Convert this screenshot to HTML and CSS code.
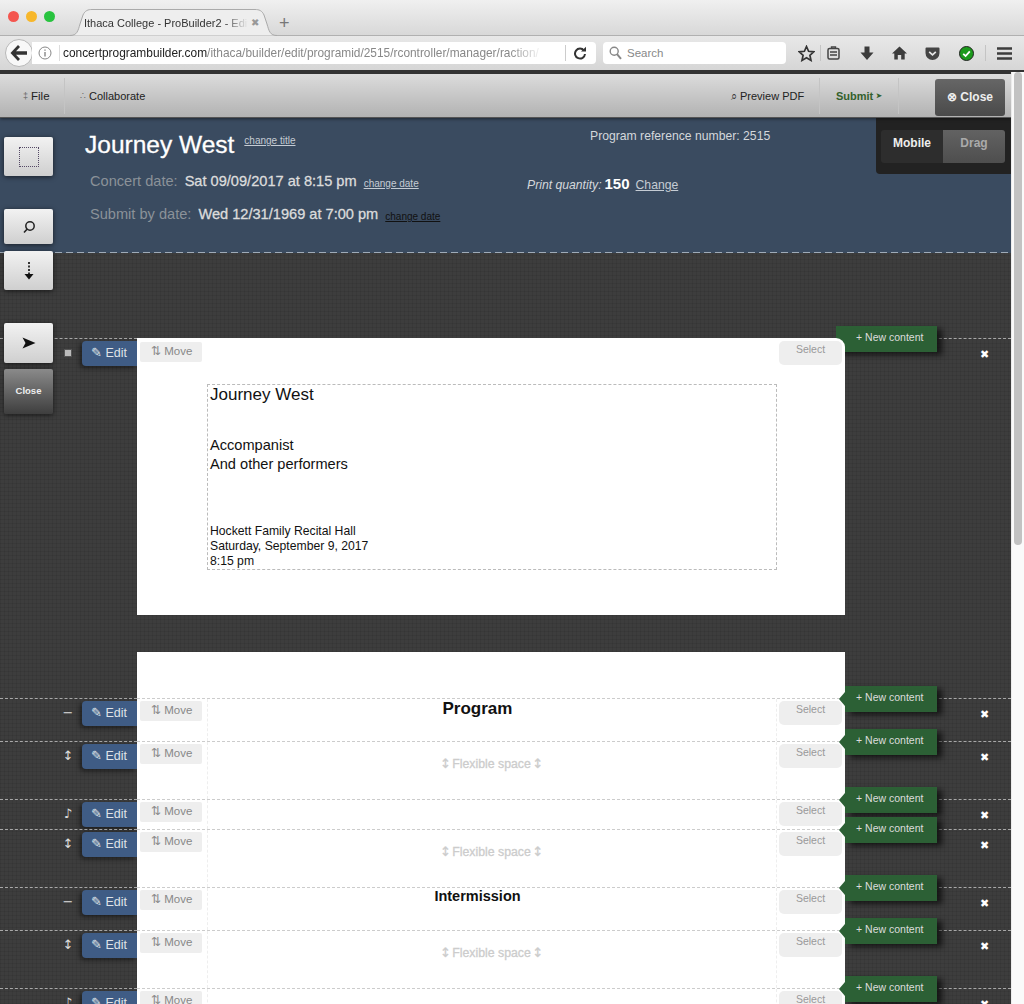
FILE: index.html
```html
<!DOCTYPE html>
<html lang="en">
<head>
<meta charset="UTF-8" />
<title>Ithaca College - ProBuilder2 - Edit</title>
<link rel="stylesheet" href="styles.css">
</head>
<body>
    <div class="tabbar">
        <div class="lights">
            <span class="light light-red"></span>
            <span class="light light-yellow"></span>
            <span class="light light-green"></span>
        </div>
        <div class="tab">
            <svg class="tab-shape" width="207" height="27" viewBox="0 0 207 27"><path d="M0 26.5 C7 26.5 8 22 10 15 L13 6 C15 1.5 18 0.5 22 0.5 H185 C189 0.5 192 1.5 194 6 L197 15 C199 22 200 26.5 207 26.5" fill="#eee" stroke="#aaa"/></svg>
            <span class="tab-title">Ithaca College - ProBuilder2 - Edit</span>
            <span class="tab-close">✖</span>
        </div>
        <span class="tab-new">+</span>
    </div>

    <div class="navbar">
        <div class="back">
            <svg width="20" height="18" viewBox="0 0 20 18"><path d="M9 1 L1.5 9 L9 17 L11 15 L7 10.7 H18 V7.3 H7 L11 3 Z" fill="#333"/></svg>
        </div>
        <div class="urlbar">
            <svg class="info" width="14" height="14" viewBox="0 0 14 14"><circle cx="7" cy="7" r="6" fill="none" stroke="#888" stroke-width="1"/><path d="M7 6 V10.5 M7 3.4 V4.8" stroke="#888" stroke-width="1.4"/></svg>
            <span class="url"><span class="url-host">concertprogrambuilder.com</span>/ithaca/builder/edit/programid/2515/rcontroller/manager/raction/</span>
            <span class="url-sep"></span>
            <svg class="reload" width="14" height="14" viewBox="0 0 14 14"><path d="M11 4.5 A5 5 0 1 0 12 8" fill="none" stroke="#333" stroke-width="2"/><path d="M8 5.5 H13 V0.8 Z" fill="#333"/></svg>
        </div>
        <div class="searchbar">
            <svg width="13" height="14" viewBox="0 0 13 14"><circle cx="5.2" cy="5.2" r="4" fill="none" stroke="#888" stroke-width="1.4"/><path d="M8 8.2 L12 12.8" stroke="#888" stroke-width="2"/></svg>
            <span>Search</span>
        </div>
        <div class="nav-icons">
            <svg width="17" height="17" viewBox="0 0 17 17"><path d="M8.5 1.5 L10.6 6.3 L15.8 6.8 L11.9 10.3 L13 15.4 L8.5 12.8 L4 15.4 L5.1 10.3 L1.2 6.8 L6.4 6.3 Z" fill="none" stroke="#333" stroke-width="1.7"/></svg>
            <span class="nav-sep nav-sep-star"></span>
            <svg class="nav-clip" width="13" height="14" viewBox="0 0 13 14"><rect x="1" y="2.5" width="11" height="10.5" rx="1.5" fill="none" stroke="#444" stroke-width="1.5"/><path d="M4.5 2.5 V1 H8.5 V2.5 M3 6 H10 M3 9 H10" stroke="#444" stroke-width="1.4" fill="none"/></svg>
            <svg class="nav-down" width="14" height="15" viewBox="0 0 14 15"><path d="M4.5 0.5 H9.5 V6.5 H13.5 L7 14 L0.5 6.5 H4.5 Z" fill="#3c3c3c"/></svg>
            <svg class="nav-home" width="15" height="14" viewBox="0 0 15 14"><path d="M7.5 0.5 L15 7.5 H12.7 V13.5 H9.2 V9 H5.8 V13.5 H2.3 V7.5 H0 Z" fill="#3c3c3c"/></svg>
            <svg class="nav-pocket" width="15" height="13" viewBox="0 0 15 13"><path d="M1.5 0.5 H13.5 A1 1 0 0 1 14.5 1.5 V6 A7 7 0 0 1 0.5 6 V1.5 A1 1 0 0 1 1.5 0.5 Z" fill="#444"/><path d="M4.2 4.8 L7.5 7.8 L10.8 4.8" fill="none" stroke="#e6e6e6" stroke-width="1.7"/></svg>
            <svg class="nav-check" width="15" height="15" viewBox="0 0 15 15"><circle cx="7.5" cy="7.5" r="7" fill="#1c9a1c" stroke="#222" stroke-width="1"/><path d="M4.2 7.8 L6.6 10 L10.8 5.4" fill="none" stroke="#fff" stroke-width="1.8"/></svg>
            <span class="nav-sep nav-sep-menu"></span>
            <svg class="nav-menu" width="15" height="13" viewBox="0 0 15 13"><path d="M0 1.5 H15 M0 6.5 H15 M0 11.5 H15" stroke="#3c3c3c" stroke-width="2.4"/></svg>
        </div>
    </div>

    <div class="app">
        <div class="main">
            <div class="menubar">
                <div class="menu-item menu-file"><span class="menu-glyph">‡</span> File</div>
                <div class="menu-item menu-collab"><span class="menu-glyph">∴</span> Collaborate</div>
                <div class="menu-right">
                    <div class="menu-item menu-preview"><span class="menu-glyph">⌕</span> Preview PDF</div>
                    <div class="menu-item menu-submit">Submit <span class="submit-arrow">➤</span></div>
                    <div class="menu-close">⊗ Close</div>
                </div>
            </div>

            <div class="header">
                <div class="header-left">
                    <div class="title-line">
                        <h1>Journey West</h1>
                        <a class="small-link">change title</a>
                    </div>
                    <div class="date-line">
                        <span class="date-label">Concert date:</span>
                        <span class="date-value">Sat 09/09/2017 at 8:15 pm</span>
                        <a class="small-link">change date</a>
                    </div>
                    <div class="date-line">
                        <span class="date-label">Submit by date:</span>
                        <span class="date-value">Wed 12/31/1969 at 7:00 pm</span>
                        <a class="small-link small-link-dark">change date</a>
                    </div>
                </div>
                <div class="header-mid">
                    <div class="ref-number">Program reference number: 2515</div>
                    <div class="print-line">
                        <em>Print quantity:</em>
                        <strong>150</strong>
                        <a>Change</a>
                    </div>
                </div>
                <div class="mode-panel">
                    <div class="mode-btn mode-on">Mobile</div>
                    <div class="mode-btn mode-off">Drag</div>
                </div>
            </div>

            <div class="side-tools">
                <div class="tool tool-select"><span class="dotted-box"></span></div>
                <div class="tool tool-zoom">
                    <svg width="14" height="14" viewBox="0 0 14 14"><circle cx="8" cy="6" r="4.2" fill="none" stroke="#222" stroke-width="1.5"/><path d="M5 9.2 L2 12.5" stroke="#222" stroke-width="1.6"/></svg>
                </div>
                <div class="tool tool-down">
                    <svg width="12" height="18" viewBox="0 0 12 18"><path d="M6 0 V2 M6 3.5 V5.5 M6 7 V9 M6 10.5 V13" stroke="#222" stroke-width="1.8"/><path d="M1.5 12 H10.5 L6 17.5 Z" fill="#111"/></svg>
                </div>
                <div class="tool tool-send">
                    <svg width="14" height="12" viewBox="0 0 14 12"><path d="M0.5 0.5 L13.5 6 L0.5 11.5 L3.5 6 Z" fill="#111"/></svg>
                </div>
                <div class="tool tool-close">Close</div>
            </div>

            <div class="stage">
                <div class="row row-cover">
                    <div class="row-left">
                        <span class="row-type type-box"></span>
                        <div class="edit-btn">✎ Edit</div>
                    </div>
                    <div class="row-main row-main-top">
                        <div class="move-btn">⇅ Move</div>
                        <div class="cover-box">
                            <div class="cover-title">Journey West</div>
                            <div class="cover-names">Accompanist<br>And other performers</div>
                            <div class="cover-venue">Hockett Family Recital Hall<br>Saturday, September 9, 2017<br>8:15 pm</div>
                        </div>
                        <div class="select-btn">Select</div>
                    </div>
                    <div class="row-right">
                        <div class="new-btn new-btn-first">+ New content</div>
                        <span class="row-remove">✖</span>
                    </div>
                </div>

                <div class="sheet-top"></div>

                <div class="row row-title">
                    <div class="row-left"><span class="row-type">−</span><div class="edit-btn">✎ Edit</div></div>
                    <div class="row-main">
                        <div class="move-btn">⇅ Move</div>
                        <div class="row-body"><div class="heading heading-big">Program</div></div>
                        <div class="select-btn">Select</div>
                    </div>
                    <div class="row-right"><div class="new-btn">+ New content</div><span class="row-remove">✖</span></div>
                </div>

                <div class="row row-space">
                    <div class="row-left"><span class="row-type">↕</span><div class="edit-btn">✎ Edit</div></div>
                    <div class="row-main">
                        <div class="move-btn">⇅ Move</div>
                        <div class="row-body"><div class="flex-space"><span class="flex-arrow flex-arrow-l">↕</span> Flexible space <span class="flex-arrow flex-arrow-r">↕</span></div></div>
                        <div class="select-btn">Select</div>
                    </div>
                    <div class="row-right"><div class="new-btn">+ New content</div><span class="row-remove">✖</span></div>
                </div>

                <div class="row row-piece">
                    <div class="row-left"><span class="row-type">♪</span><div class="edit-btn">✎ Edit</div></div>
                    <div class="row-main">
                        <div class="move-btn">⇅ Move</div>
                        <div class="row-body"></div>
                        <div class="select-btn">Select</div>
                    </div>
                    <div class="row-right"><div class="new-btn">+ New content</div><span class="row-remove">✖</span></div>
                </div>

                <div class="row row-space">
                    <div class="row-left"><span class="row-type">↕</span><div class="edit-btn">✎ Edit</div></div>
                    <div class="row-main">
                        <div class="move-btn">⇅ Move</div>
                        <div class="row-body"><div class="flex-space"><span class="flex-arrow flex-arrow-l">↕</span> Flexible space <span class="flex-arrow flex-arrow-r">↕</span></div></div>
                        <div class="select-btn">Select</div>
                    </div>
                    <div class="row-right"><div class="new-btn">+ New content</div><span class="row-remove">✖</span></div>
                </div>

                <div class="row row-title">
                    <div class="row-left"><span class="row-type">−</span><div class="edit-btn">✎ Edit</div></div>
                    <div class="row-main">
                        <div class="move-btn">⇅ Move</div>
                        <div class="row-body"><div class="heading">Intermission</div></div>
                        <div class="select-btn">Select</div>
                    </div>
                    <div class="row-right"><div class="new-btn">+ New content</div><span class="row-remove">✖</span></div>
                </div>

                <div class="row row-space">
                    <div class="row-left"><span class="row-type">↕</span><div class="edit-btn">✎ Edit</div></div>
                    <div class="row-main">
                        <div class="move-btn">⇅ Move</div>
                        <div class="row-body"><div class="flex-space"><span class="flex-arrow flex-arrow-l">↕</span> Flexible space <span class="flex-arrow flex-arrow-r">↕</span></div></div>
                        <div class="select-btn">Select</div>
                    </div>
                    <div class="row-right"><div class="new-btn">+ New content</div><span class="row-remove">✖</span></div>
                </div>

                <div class="row row-piece">
                    <div class="row-left"><span class="row-type">♪</span><div class="edit-btn">✎ Edit</div></div>
                    <div class="row-main">
                        <div class="move-btn">⇅ Move</div>
                        <div class="row-body"></div>
                        <div class="select-btn">Select</div>
                    </div>
                    <div class="row-right"><div class="new-btn">+ New content</div><span class="row-remove">✖</span></div>
                </div>
            </div>
        </div>

        <div class="scrollbar"><div class="scroll-thumb"></div></div>
    </div>
</body>
</html>
```

FILE: styles.css
```css
* {
    box-sizing: border-box;
}

html, body {
    height: 1004px;
    overflow: hidden;
}

body {
    margin: 0;
    font-family: "Liberation Sans", Arial, sans-serif;
    background: #fff;
}

/* browser chrome */
.tabbar {
    height: 36px;
    background: linear-gradient(#f0f0f0, #d8d8d8);
    border-bottom: 1px solid #b0b0b0;
    display: flex;
    align-items: flex-end;
}

.lights {
    display: flex;
    gap: 7px;
    padding: 0 0 13px 8px;
}

.light {
    width: 11px;
    height: 11px;
    border-radius: 50%;
}
.light-red { background: #f4564f; }
.light-yellow { background: #f7b72b; }
.light-green { background: #28c33f; }

.tab {
    width: 207px;
    height: 27px;
    margin: 0 0 -1px 15px;
    padding: 0 0 0 14px;
    display: flex;
    align-items: center;
    font-size: 11px;
    color: #333;
    position: relative;
}

.tab-shape {
    position: absolute;
    left: 0;
    top: 0;
}

.tab-title {
    width: 164px;
    white-space: nowrap;
    overflow: hidden;
    position: relative;
    -webkit-mask-image: linear-gradient(90deg, #000 85%, transparent);
    mask-image: linear-gradient(90deg, #000 85%, transparent);
}

.tab-close {
    margin-left: 3px;
    font-size: 10px;
    color: #999;
    position: relative;
}

.tab-new {
    margin: 0 0 0 2px;
    font-size: 18px;
    color: #777;
    line-height: 24px;
}

.navbar {
    height: 34px;
    background: linear-gradient(#e8e8e8, #d6d6d6);
    display: flex;
    align-items: center;
    position: relative;
}

.back {
    width: 28px;
    height: 28px;
    margin-left: 5px;
    background: #f8f8f8;
    border: 1px solid #b8b8b8;
    border-radius: 50%;
    display: flex;
    align-items: center;
    justify-content: center;
    flex-shrink: 0;
}

.urlbar {
    width: 564px;
    height: 22px;
    margin-left: -1px;
    background: #fff;
    border-radius: 0 4px 4px 0;
    display: flex;
    align-items: center;
    font-size: 11.9px;
}

.info {
    margin-left: 6px;
    flex-shrink: 0;
}

.url {
    width: 484px;
    margin-left: 7px;
    padding-left: 3px;
    border-left: 1px solid #ddd;
    line-height: 16px;
    white-space: nowrap;
    overflow: hidden;
    color: #888;
    -webkit-mask-image: linear-gradient(90deg, #000 93%, transparent);
    mask-image: linear-gradient(90deg, #000 93%, transparent);
}

.url-host {
    color: #222;
}

.url-sep {
    width: 1px;
    height: 16px;
    margin-left: 22px;
    background: #ccc;
}

.reload {
    margin-left: 7px;
}

.searchbar {
    width: 183px;
    height: 22px;
    margin-left: 7px;
    padding-left: 6px;
    background: #fff;
    border-radius: 4px;
    display: flex;
    align-items: center;
    gap: 5px;
    font-size: 11.5px;
    color: #888;
}

.nav-icons {
    flex: 1;
    display: flex;
    align-items: center;
    padding-left: 12px;
}

.nav-sep {
    width: 1px;
    height: 16px;
    background: #c4c4c4;
}

.nav-sep-star { margin-left: 5px; }
.nav-clip { margin-left: 6px; }
.nav-down { margin-left: 20px; }
.nav-home { margin-left: 18px; }
.nav-pocket { margin-left: 18px; }
.nav-check { margin-left: 19px; }
.nav-sep-menu { margin-left: 11px; }
.nav-menu { margin-left: 11px; }

/* app area */
.app {
    display: flex;
    height: 934px;
    border-top: 4px solid #333;
}

.main {
    width: 1011px;
    height: 930px;
    position: relative;
    overflow: hidden;
}

.scrollbar {
    width: 13px;
    margin-top: -2px;
    background: #fafafa;
    border-left: 1px solid #ececec;
    padding: 0 2px;
}

.scroll-thumb {
    height: 473px;
    background: #c2c2c2;
    border-radius: 5px;
}

.menubar {
    height: 44px;
    background: linear-gradient(#dcdcdc, #b2b2b2);
    border-bottom: 1px solid #555;
    display: flex;
    font-size: 11px;
    color: #222;
    position: relative;
    z-index: 2;
    box-shadow: 0 1px 3px rgba(0, 0, 0, 0.5);
}

.menu-item {
    height: 36px;
    margin-top: 4px;
    display: flex;
    align-items: center;
    gap: 3px;
    white-space: nowrap;
    border-right: 1px solid #c4c4c4;
}

.menu-glyph {
    color: #666;
    font-size: 9px;
}

.menu-file {
    width: 65px;
    padding-left: 23px;
    font-size: 11.5px;
}

.menu-collab {
    padding-left: 15px;
    border-right: none;
}

.menu-right {
    margin-left: auto;
    display: flex;
}

.menu-preview {
    width: 90px;
    padding-left: 1px;
}

.menu-preview .menu-glyph {
    font-size: 11px;
    color: #333;
}

.menu-submit {
    width: 79px;
    padding-left: 16px;
    font-weight: bold;
    color: #33602c;
}

.submit-arrow {
    font-size: 7px;
}

.menu-close {
    width: 70px;
    height: 37px;
    margin: 5px 6px 0 36px;
    background: linear-gradient(#666, #4a4a4a);
    border-radius: 3px;
    color: #eee;
    font-weight: bold;
    font-size: 12px;
    text-align: center;
    line-height: 36px;
    white-space: nowrap;
}

.header {
    height: 135px;
    background: #3a4b60 repeating-linear-gradient(90deg, #9fabb8 0 7px, transparent 7px 11px) left bottom / 100% 1px no-repeat;
    display: flex;
    position: relative;
}

.header-left {
    width: 500px;
    padding: 12px 0 0 85px;
}

.title-line {
    display: flex;
    align-items: flex-start;
    gap: 10px;
    height: 43px;
}

h1 {
    margin: 0;
    font-size: 24.5px;
    font-weight: normal;
    line-height: 30px;
    color: #fff;
    -webkit-text-stroke: 0.3px #fff;
}

.small-link {
    font-size: 10px;
    line-height: 20px;
    color: #c5ccd4;
    text-decoration: underline;
}

.title-line .small-link {
    padding-top: 1px;
}

.date-line {
    height: 33px;
    padding: 0 0 0 5px;
    display: flex;
    align-items: baseline;
    gap: 7px;
    white-space: nowrap;
}

.date-line .small-link {
    position: relative;
    top: 1px;
}

.date-line .small-link-dark {
    color: #111;
}

.date-label {
    font-size: 14.6px;
    color: #8b9299;
}

.date-value {
    font-size: 14.6px;
    color: #dcdcdc;
    -webkit-text-stroke: 0.3px #dcdcdc;
}

.header-mid {
    width: 300px;
    margin-left: 27px;
    padding-top: 11px;
    font-size: 12.2px;
    color: #d4d8dc;
}

.ref-number {
    padding-left: 63px;
    line-height: 14px;
}

.print-line {
    margin-top: 32px;
    display: flex;
    align-items: baseline;
    gap: 3px;
}

.print-line strong {
    font-size: 15px;
    color: #fff;
}

.print-line a {
    margin-left: 3px;
    text-decoration: underline;
    color: #c5ccd4;
}

.mode-panel {
    position: absolute;
    top: 0;
    right: 0;
    width: 135px;
    height: 56px;
    padding: 12px 6px 0 5px;
    background: #222;
    border-radius: 0 0 0 4px;
    display: flex;
    font-size: 12px;
    font-weight: bold;
}

.mode-btn {
    width: 62px;
    height: 33px;
    text-align: center;
    line-height: 27px;
}

.mode-on {
    background: #2d2d2d;
    color: #eee;
    border-radius: 3px 0 0 3px;
}

.mode-off {
    background: linear-gradient(#626262, #4e4e4e);
    color: #aaa;
    border-radius: 0 3px 3px 0;
}

/* floating tools on the left */
.side-tools {
    position: absolute;
    left: 4px;
    top: 63px;
    width: 49px;
    display: flex;
    flex-direction: column;
    z-index: 3;
}

.tool {
    background: linear-gradient(#f2f2f2, #cfcfcf);
    border-radius: 2px;
    box-shadow: 0 1px 5px rgba(0, 0, 0, 0.6);
    display: flex;
    align-items: center;
    justify-content: center;
}

.tool-select { height: 39px; }
.tool-zoom { height: 35px; margin-top: 33px; }
.tool-down { height: 39px; margin-top: 7px; }
.tool-send { height: 40px; margin-top: 33px; }

.tool-close {
    height: 45px;
    margin-top: 6px;
    padding-bottom: 2px;
    background: linear-gradient(#8a8a8a, #3e3e3e);
    color: #eee;
    font-size: 9.5px;
    font-weight: bold;
}

.dotted-box {
    width: 20px;
    height: 20px;
    border: 1px dotted #554a66;
}

/* stage and rows */
.stage {
    height: 751px;
    padding-top: 85px;
    background-color: #3d3d3d;
    background-image:
        repeating-linear-gradient(0deg, rgba(0, 0, 0, 0.07) 0 1px, transparent 1px 4px),
        repeating-linear-gradient(90deg, rgba(0, 0, 0, 0.07) 0 1px, transparent 1px 4px);
    overflow: hidden;
}

.row {
    display: flex;
    position: relative;
}

.row-cover { height: 277px; margin-bottom: 37px; }
.row-title { height: 43px; }
.row-space { height: 58px; }
.row-piece { height: 30px; }

.row-left {
    width: 137px;
    padding: 2px 0 0 82px;
    border-top: 1px dashed #a8a8a8;
    position: relative;
}

.row-type {
    position: absolute;
    left: 60px;
    top: 4px;
    width: 16px;
    text-align: center;
    font-family: "DejaVu Sans", sans-serif;
    font-size: 13px;
    line-height: 20px;
    color: #ddd;
}

.type-box::before {
    content: "";
    display: inline-block;
    width: 6px;
    height: 6px;
    border: 1px solid #555;
    background: #bbb;
}

.edit-btn {
    width: 55px;
    height: 25px;
    padding-left: 9px;
    background: #3f5c85;
    border-radius: 4px 0 0 4px;
    box-shadow: -2px 2px 5px rgba(0, 0, 0, 0.5);
    color: #dfe3e8;
    font-size: 12.5px;
    line-height: 24px;
    white-space: nowrap;
}

.row-main {
    width: 708px;
    display: flex;
    align-items: flex-start;
    background: #fff;
    border-top: 1px dashed #ccc;
    position: relative;
    z-index: 1;
}

.row-main-top {
    border-top: none;
    border-top-right-radius: 9px;
    padding-top: 1px;
}

.move-btn {
    width: 62px;
    height: 20px;
    margin: 2px 5px 0 3px;
    flex-shrink: 0;
    padding-left: 11px;
    background: #eee;
    border-radius: 2px;
    color: #888;
    font-size: 11.5px;
    line-height: 19px;
    white-space: nowrap;
}

.row-main-top .move-btn {
    margin-top: 3px;
}

.row-body {
    width: 570px;
    height: 100%;
    flex-shrink: 0;
    border-left: 1px dashed #eee;
    border-right: 1px dashed #eee;
    margin-right: 2px;
    text-align: center;
}

.select-btn {
    width: 63px;
    height: 24px;
    margin-top: 2px;
    flex-shrink: 0;
    background: #eee;
    border-radius: 5px;
    color: #999;
    font-size: 10.5px;
    line-height: 16px;
    text-align: center;
}

.cover-box {
    width: 570px;
    height: 186px;
    margin: 45px 2px 0 0;
    flex-shrink: 0;
    padding: 0 2px;
    border: 1px dashed #bbb;
    color: #111;
}

.cover-title {
    font-size: 17px;
    line-height: 20px;
}

.cover-names {
    margin-top: 31px;
    font-size: 14.6px;
    line-height: 18.5px;
}

.cover-venue {
    margin-top: 51px;
    font-size: 12.2px;
    line-height: 15px;
}

.heading {
    padding: 0 29px 0 0;
    margin-top: -1px;
    font-weight: bold;
    font-size: 14.5px;
    line-height: 18px;
    color: #111;
}

.heading-big {
    margin-top: 0;
    font-size: 17px;
    line-height: 20px;
}

.flex-space {
    padding: 13px 1px 0 0;
    font-size: 12.3px;
    line-height: 18px;
    color: #ccc;
    -webkit-text-stroke: 0.3px #ccc;
}

.flex-arrow {
    font-family: "DejaVu Sans", sans-serif;
    font-size: 13px;
    line-height: 18px;
}

.flex-arrow-l { margin-right: -2px; }
.flex-arrow-r { margin-left: -2px; }

.row-right {
    flex: 1;
    border-top: 1px dashed #a8a8a8;
    position: relative;
}

.new-btn {
    position: absolute;
    left: 0;
    top: -13px;
    width: 92px;
    height: 26px;
    padding-left: 11px;
    background: #2c6035;
    box-shadow: 5px 3px 6px rgba(0, 0, 0, 0.65);
    color: #ddd;
    font-size: 10.5px;
    line-height: 23px;
    white-space: nowrap;
    z-index: 2;
}

.new-btn::before {
    content: "";
    position: absolute;
    left: -6px;
    top: 6px;
    border-top: 7px solid transparent;
    border-bottom: 7px solid transparent;
    border-right: 6px solid #2c6035;
}

.new-btn-first {
    left: -9px;
    width: 101px;
    padding-left: 20px;
    z-index: 0;
}

.new-btn-first::before {
    display: none;
}

.row-remove {
    position: absolute;
    left: 135px;
    top: 8px;
    font-family: "DejaVu Sans", sans-serif;
    font-size: 11px;
    line-height: 16px;
    color: #fff;
}

.sheet-top {
    width: 708px;
    height: 46px;
    margin-left: 137px;
    background: #fff;
}
```
